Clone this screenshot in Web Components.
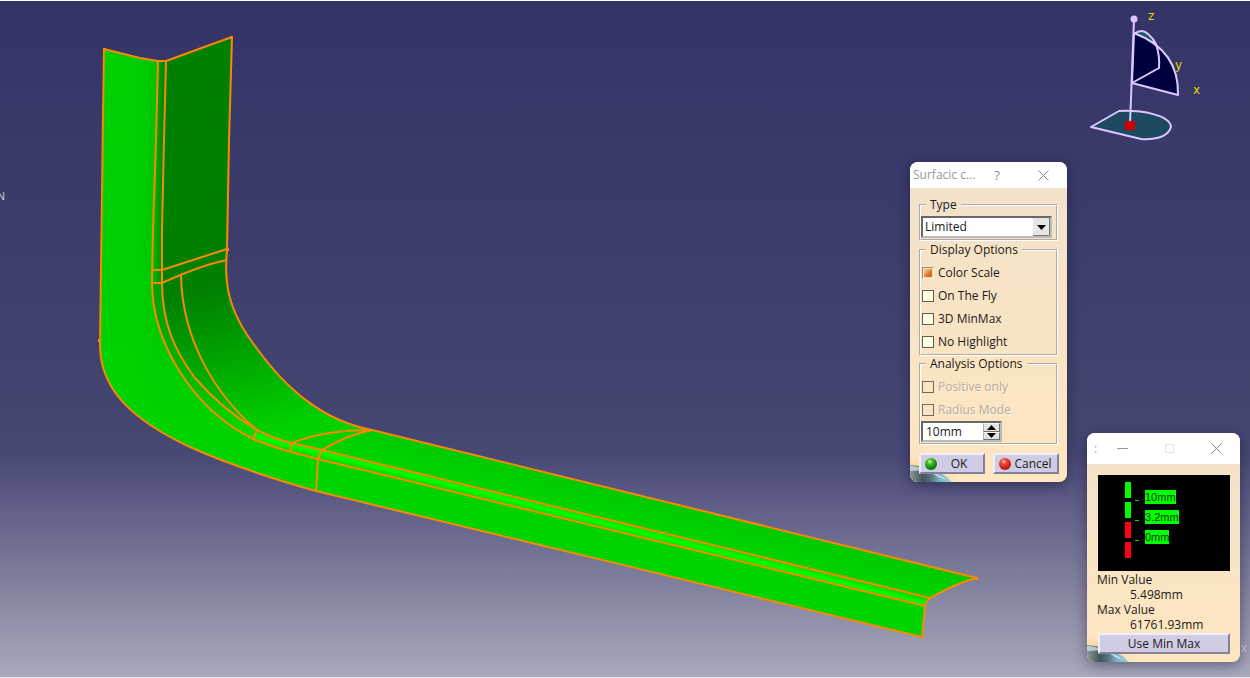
<!DOCTYPE html>
<html lang="en">
<head>
<meta charset="utf-8">
<title>Surfacic curvature analysis</title>
<style>
html, body { height: 100%; margin: 0; }
body { font: 12px/16px "Open Sans", "Noto Sans", sans-serif; color: #1c1a18; overflow: hidden; }
</style>
</head>
<body>
<cad-desktop>
  <cad-part slot="scene"></cad-part>
  <cad-compass slot="compass"></cad-compass>
  <analysis-dialog slot="dialog"></analysis-dialog>
  <scale-dialog slot="scale"></scale-dialog>
</cad-desktop>
<script>
const define = (name, html, init) => customElements.define(name, class extends HTMLElement {
  constructor() {
    super();
    const t = document.createElement('template');
    t.innerHTML = html;
    this.attachShadow({ mode: 'open' }).append(t.content.cloneNode(true));
    if (init) init(this, this.shadowRoot);
  }
});

define('cad-desktop', `
<style>
:host { display: block; position: relative; height: 100%; box-sizing: border-box; overflow: hidden;
  border-top: 1px solid #fff; border-bottom: 1px solid #e4e4ec;
  background: linear-gradient(#333366 0%, #3c3c6c 30%, #444471 60%, #484875 67%, #62628a 76%, #80809d 86%, #a9a9bc 100%); }
::slotted([slot=scene]) { position: absolute; inset: 0; }
::slotted([slot=compass]) { position: absolute; top: 0; right: 45px; }
::slotted([slot=dialog]) { position: absolute; top: 161px; right: 183px; width: 157px; }
::slotted([slot=scale]) { position: absolute; top: 432px; right: 10px; width: 153px; }
.n { position: absolute; left: -3px; top: 187px; color: #c8c8dc; font: 11px/16px "Liberation Sans", sans-serif; }
.x { position: absolute; right: 3px; top: 639px; color: #d0d0e0; font: 12px/16px "Liberation Sans", sans-serif; }
</style>
<slot name="scene"></slot><span class="n">N</span><span class="x">x</span>
<slot name="compass"></slot><slot name="dialog"></slot><slot name="scale"></slot>`);

define('cad-part', `
<style>:host { display: block; } svg { display: block; width: 1250px; height: 678px; }</style>
<svg viewBox="0 1 1250 678" role="img" aria-label="Bent part with curvature analysis">
<defs>
<linearGradient id="flank" gradientUnits="userSpaceOnUse" x1="100" y1="0" x2="158" y2="0"><stop offset="0" stop-color="#00d000"/><stop offset=".6" stop-color="#00cf00"/><stop offset="1" stop-color="#00c200"/></linearGradient>
<linearGradient id="low" gradientUnits="userSpaceOnUse" x1="0" y1="200" x2="0" y2="440"><stop offset="0" stop-color="#00d200" stop-opacity="0"/><stop offset="1" stop-color="#00d400"/></linearGradient>
<linearGradient id="fold" gradientUnits="userSpaceOnUse" x1="153" y1="0" x2="166" y2="0"><stop offset="0" stop-color="#00b800"/><stop offset="1" stop-color="#007c00"/></linearGradient>
<linearGradient id="bend" gradientUnits="userSpaceOnUse" x1="200" y1="290" x2="235" y2="440"><stop offset="0" stop-color="#008000"/><stop offset=".3" stop-color="#009600"/><stop offset=".7" stop-color="#00b800"/><stop offset="1" stop-color="#00d200"/></linearGradient>
<linearGradient id="strip" gradientUnits="userSpaceOnUse" x1="154" y1="270" x2="300" y2="448"><stop offset="0" stop-color="#009c00"/><stop offset=".4" stop-color="#00b400"/><stop offset=".8" stop-color="#00dc00"/><stop offset="1" stop-color="#00f000"/></linearGradient>
<linearGradient id="arm" gradientUnits="userSpaceOnUse" x1="600" y1="486" x2="590" y2="526"><stop offset="0" stop-color="#00ca00"/><stop offset="1" stop-color="#00d800"/></linearGradient>
<linearGradient id="ridge" gradientUnits="userSpaceOnUse" x1="600" y1="517" x2="597.500" y2="527"><stop offset="0" stop-color="#00dc00"/><stop offset=".5" stop-color="#00ff00"/><stop offset="1" stop-color="#00dc00"/></linearGradient>
</defs>
<path fill="url(#flank)" d="M104 49L140 58L158 61L156 140L153 230L152 282C152 340 190 407 253 439C275 448 290 452 318 459L316 491C284 482 237 468 190 447C130 419 100 388 100 345L101 270Z"/>
<path fill="url(#low)" d="M101 200H154L152 282C152 340 190 407 253 439C275 448 290 452 318 459L316 491C284 482 237 468 190 447C130 419 100 388 100 345Z"/>
<path fill="#00d400" d="M318 459L925 606L922 637L316 491Z"/>
<path fill="#008000" d="M166 61L207 46L232 37L229 140L227 260L190 271L162 282V230L164 140Z"/>
<path fill="url(#fold)" d="M158 61H166L164 140L162 230V283H152L153 230L156 140Z"/>
<path fill="url(#bend)" d="M162 282L190 271L227 260C226 300 240 326 255 346C288 392 325 421 372 430C352 434 340 440 322 450L292 443C240 428 222 405 195 378C174 350 162 322 162 282Z"/>
<path fill="url(#strip)" d="M152 282H162C162 322 174 350 195 378C222 405 240 428 292 443L290 452C275 448 265 444 253 439C190 407 152 340 152 282Z"/>
<path fill="url(#arm)" d="M322 450C340 440 352 434 372 430L977 578C960 582 945 590 930 598Z"/>
<path fill="url(#ridge)" d="M257 430L292 443L322 450L930 598L925 606L318 459L290 452L253 439Z"/>
<g fill="none" stroke="#fa8800" stroke-width="2" stroke-linejoin="round">
<path d="M104 49L140 58L158 61H166L207 46L232 37L229 140L227 250C226 262 226 275 227 282C229 304 239 325 255 346C288 392 325 421 372 430L977 578C960 582 945 590 930 598Q925 602 925 607L922 637L316 491C284 482 237 468 190 447C130 419 100 388 100 345L101 270L103 115Z"/>
<path d="M158 61L156 140L153 230L152 282C152 340 190 407 253 439C275 448 290 452 318 459L925 606"/>
<path d="M166 61L164 140L162 230V282C162 322 174 350 195 378C216 402 238 419 257 430Q274 439 292 443L322 450L930 598"/>
<path d="M181 275C182 340 216 396 257 430L253 439M151 270H162L227 249M151 283H162C184 273 206 264 227 260"/>
<path d="M290 452L292 443C312 435 337 430 372 430C352 434 340 440 322 450L318 459L316 491"/>
</g>
<path fill="#fa8800" d="M103 48h3v3h-3zM230 36h3v3h-3zM98 339h3v3h-3zM226 248h3v3h-3zM975 577h3v3h-3zM921 635h3v3h-3zM317 457h3v3h-3z"/>
</svg>`);

define('cad-compass', `
<style>:host { display: block; } svg { display: block; width: 120px; height: 144px; }
text { fill: #e0d800; font: 12px/14px "DejaVu Sans", sans-serif; }</style>
<svg viewBox="1085 1 120 144" role="img" aria-label="Compass">
<g stroke="#dcc8ff" stroke-width="2" stroke-linejoin="round">
<path fill="#1d4a62" d="M1091 127L1119 111C1142 110 1170 115 1171 127C1168 138 1152 140 1141 139Z"/>
<path fill="#1d5564" d="M1134 34Q1142 28 1148 34Q1153 38 1156 44Z"/>
<path fill="#000040" d="M1134 33C1160 43 1179 61 1178 95L1132 83Z"/>
<path fill="none" d="M1156 44Q1160 56 1159 68L1132 83M1134 19L1130 124"/>
</g>
<circle cx="1134" cy="19" r="3.500" fill="#dcc8ff"/><path fill="#d00000" d="M1125 121h10v9h-10z"/>
<text x="1148" y="20">z</text><text x="1175" y="69">y</text><text x="1193" y="94">x</text>
</svg>`);

define('window-frame', `
<style>
:host { display: block; position: relative; border-radius: 8px; overflow: hidden; box-shadow: 0 3px 14px rgba(10,10,40,.45);
  background: linear-gradient(#f2e2cc, #f8e4c4 50%, #fee6c0); }
header { background: #fff; height: var(--bar, 26px); display: flex; align-items: center; color: #999; }
.globe { position: absolute; left: 0; bottom: 0; width: 48px; height: 30px; }
.body { position: relative; }
</style>
<header><slot name="bar"></slot></header>
<svg class="globe" viewBox="0 0 48 30"><defs>
<radialGradient id="r" cx=".2" cy=".9" r=".8"><stop offset="0" stop-color="#fbb84a"/><stop offset="1" stop-color="#fcd590" stop-opacity="0"/></radialGradient>
<linearGradient id="g"><stop offset="0" stop-color="#8a9a9c"/><stop offset=".3" stop-color="#44545a"/><stop offset=".5" stop-color="#58707c"/><stop offset=".7" stop-color="#7cb0c8"/><stop offset="1" stop-color="#a8d0e0"/></linearGradient></defs>
<path fill="url(#r)" d="M0 0H48V30H0z"/>
<path fill="url(#g)" d="M0 13C14 14 31 18 42 30H0Z"/><path fill="#c8dce0" opacity=".8" d="M0 14Q10 14 18 19Q10 18 0 19Z"/><path fill="#d8ecf4" opacity=".7" d="M22 21Q30 22 36 28L28 25Z"/>
</svg>
<div class="body"><slot></slot></div>`);

define('option-group', `
<style>
:host { display: block; }
fieldset { margin: 0; min-width: 0; padding: 3px 0 1px; border: 2px groove #fff; }
legend { margin-left: 5px; padding: 0 4px; height: 16px; }
</style>
<fieldset><legend></legend><slot></slot></fieldset>`, (h, r) => { r.querySelector('legend').textContent = h.getAttribute('name'); });

define('check-option', `
<style>
:host { display: block; height: 23px; }
label { display: flex; align-items: center; height: 23px; gap: 4px; padding-left: 1px; }
input { appearance: none; flex: none; box-sizing: border-box; margin: 0; width: 12px; height: 12px; border: 1px solid #606058; background: #ffffe0; border-radius: 0; }
input:checked { border-color: #fff4d0; border-left-color: #9c9080; border-top-color: #9c9080; background: linear-gradient(135deg, #f8c080 15%, #e47828 60%, #b85818) 1px 1px / 8px 8px no-repeat #f8dcb0; }
input:disabled { background: transparent; border-color: #706c64; }
input:disabled + span { color: #b5aa9b; text-shadow: 1px 1px #fff4e0; }
</style>
<label><input type="checkbox"><span></span></label>`, (h, r) => {
  r.querySelector('span').textContent = h.getAttribute('name');
  const i = r.querySelector('input');
  i.checked = h.hasAttribute('checked'); i.disabled = h.hasAttribute('disabled');
});

define('push-button', `
<style>
:host { display: block; }
button { width: 100%; height: 21px; margin: 0; padding: 0 4px; display: flex; align-items: center; font: inherit; color: inherit; white-space: nowrap;
  background: #cfcce4; border: 2px solid; border-color: #f0eefa #83809c #83809c #f0eefa; border-radius: 0; }
.label { flex: 1; text-align: center; }
</style>
<button type="button"><slot name="icon"></slot><span class="label"><slot></slot></span></button>`);

define('analysis-dialog', `
<style>
:host { display: block; }
.title { flex: 1; padding-left: 3px; white-space: nowrap; }
.tool { appearance: none; border: 0; padding: 0; margin: 0; background: none; color: #888; display: grid; place-items: center; height: 24px; }
.help { width: 24px; font: 13px/16px "Open Sans", sans-serif; } .close { width: 24px; margin: 0 12px 0 22px; }
.content { padding: 9px 9px 8px; display: flex; flex-direction: column; gap: 1px; }
option-group + option-group + option-group { margin-top: -1px; }
.combo { position: relative; width: 131px; height: 22px; }
select { appearance: none; display: block; box-sizing: border-box; width: 100%; height: 22px; margin: 0; padding: 0 2px; border: 2px inset #bbb; border-radius: 0; background: #fff; font: inherit; color: inherit; }
.combo svg { position: absolute; right: 2px; top: 2px; pointer-events: none; }
.spin { display: flex; width: 81px; height: 21px; box-sizing: border-box; border: 2px inset #bbb; background: #fff; }
.spin input { flex: 1; min-width: 0; border: 0; margin: 0; padding: 0 3px; font: inherit; color: inherit; background: #fff; }
.arrows { display: flex; flex-direction: column; width: 17px; }
.arrows button { flex: 1; min-height: 0; padding: 0; margin: 0; border: 1px solid; border-color: #f8f8f8 #707070 #707070 #b0b0b0; background: #e4e2e0; display: grid; place-items: center; border-radius: 0; }
.actions { display: flex; gap: 8px; margin: 7px -1px 0 0; }
.actions push-button { flex: 1; }
.ball { display: block; width: 12px; height: 12px; margin-right: 2px; border-radius: 50%; }
.ok { background: radial-gradient(circle at 40% 30%, #e0ffc0 0, #50c830 20%, #108c10 55%, #085008); }
.no { background: radial-gradient(circle at 40% 30%, #ffd8c8 0, #f05040 20%, #d42020 55%, #701010); }
</style>
<window-frame>
<span slot="bar" class="title">Surfacic c...</span>
<button slot="bar" class="tool help" aria-label="Help">?</button>
<button slot="bar" class="tool close" aria-label="Close"><svg width="11" height="11" viewBox="0 0 11 11"><path d="M.5 .5L10.500 10.500M10.500 .5L.5 10.500" stroke="#888" fill="none"/></svg></button>
<div class="content">
<option-group name="Type"><div class="combo"><select aria-label="Type"><option>Limited</option></select>
<svg width="17" height="18" viewBox="0 0 17 18"><path fill="#e8e6e2" d="M0 0h17v18H0z"/><path fill="none" stroke="#777" d="M0 17.500H16.500V0"/><path d="M4 7h9L8.500 12z"/></svg></div></option-group>
<option-group name="Display Options"><check-option name="Color Scale" checked></check-option><check-option name="On The Fly"></check-option><check-option name="3D MinMax"></check-option><check-option name="No Highlight"></check-option></option-group>
<option-group name="Analysis Options"><check-option name="Positive only" disabled></check-option><check-option name="Radius Mode" disabled></check-option>
<div class="spin"><input type="text" value="10mm" aria-label="Radius"><div class="arrows"><button aria-label="Increase"><svg width="9" height="5"><path d="M0 5L4.500 0L9 5z"/></svg></button><button aria-label="Decrease"><svg width="9" height="5"><path d="M0 0L4.500 5L9 0z"/></svg></button></div></div></option-group>
<div class="actions"><push-button><i slot="icon" class="ball ok"></i>OK</push-button><push-button><i slot="icon" class="ball no"></i>Cancel</push-button></div>
</div></window-frame>`);

define('scale-dialog', `
<style>
:host { display: block; --bar: 31px; }
.dots { flex: 1; padding-left: 7px; color: #b89a9a; }
.tool { border: 0; padding: 0; margin: 0 12px 0 11px; width: 24px; height: 24px; background: none; display: grid; place-items: center; }
.content { padding: 11px 10px 8px 11px; }
.scale { display: flex; height: 96px; box-sizing: border-box; background: #000; padding: 7px 0 0 27px; }
.bars { display: flex; flex-direction: column; gap: 4px; width: 6px; }
.bars i { height: 16px; background: #0f0; } .bars i.red { background: #ff0010; }
ul { list-style: none; margin: 8px 0 0 4px; padding: 0; display: flex; flex-direction: column; gap: 6px; }
li { display: flex; align-items: flex-end; gap: 6px; height: 14px; }
li::before { content: ""; width: 4px; height: 1px; margin-bottom: 3px; background: #0d0; }
li span { background: #0f0; color: #003800; font: 11px/14px "Liberation Sans", sans-serif; }
dl { margin: 1px 0 0 -1px; line-height: 15px; } dd { margin: 0 0 0 33px; }
push-button { margin-top: 1px; }
</style>
<window-frame>
<span slot="bar" class="dots">:</span>
<button slot="bar" class="tool" aria-label="Minimize"><svg width="11" height="11"><path stroke="#999" d="M0 5.500H11"/></svg></button>
<button slot="bar" class="tool" aria-label="Maximize"><svg width="11" height="11"><path stroke="#e2e2e2" fill="none" d="M1.500 1.500h8v8h-8z"/></svg></button>
<button slot="bar" class="tool" aria-label="Close"><svg width="11" height="11"><path stroke="#888" d="M.5 .5L10.500 10.500M10.500 .5L.5 10.500"/></svg></button>
<div class="content">
<div class="scale"><div class="bars"><i></i><i></i><i class="red"></i><i class="red"></i></div><ul><li><span>10mm</span></li><li><span>3.2mm</span></li><li><span>0mm</span></li></ul></div>
<dl><dt>Min Value</dt><dd>5.498mm</dd><dt>Max Value</dt><dd>61761.93mm</dd></dl>
<push-button>Use Min Max</push-button>
</div></window-frame>`);
</script>
</body>
</html>
